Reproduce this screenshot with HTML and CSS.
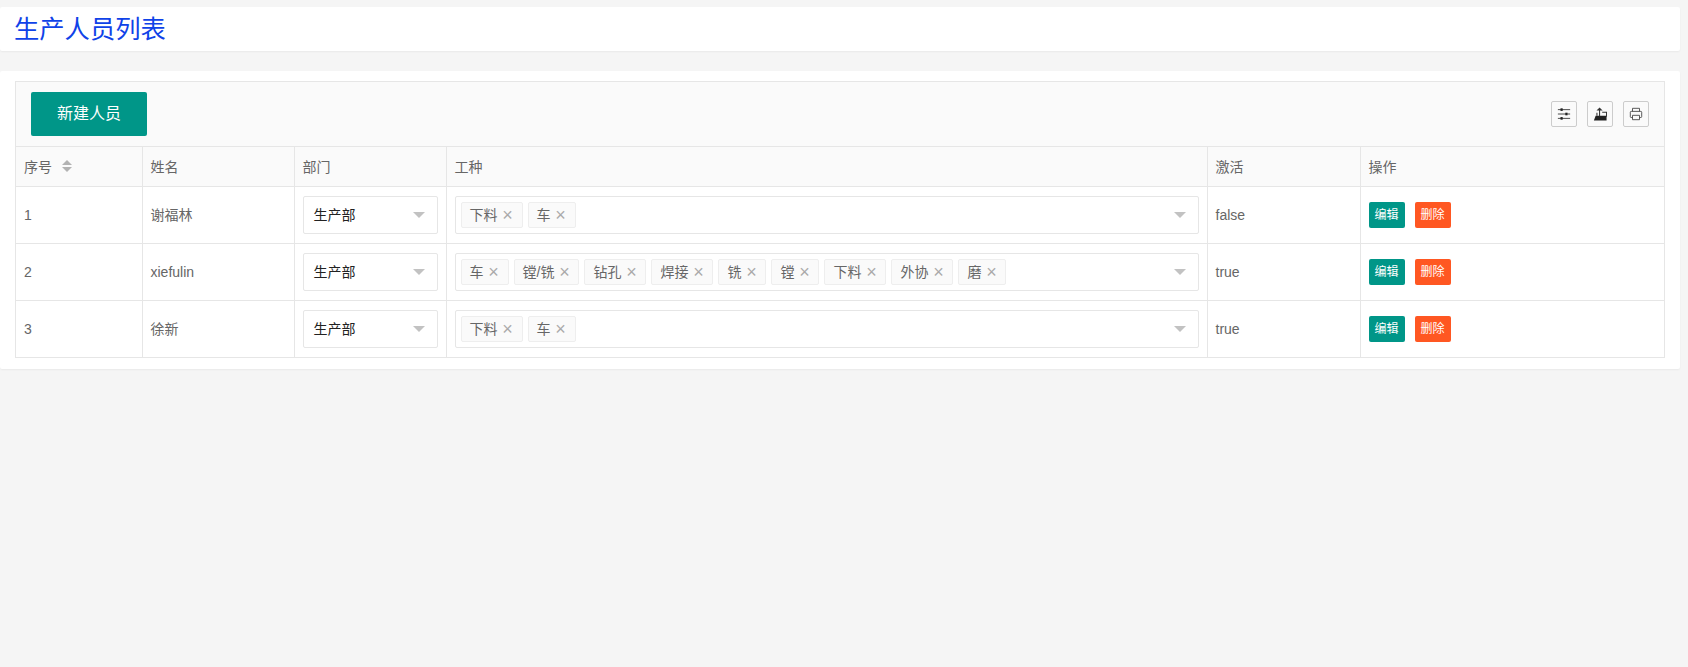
FILE: index.html
```html
<!DOCTYPE html>
<html lang="zh">
<head>
<meta charset="utf-8">
<title>生产人员列表</title>
<link rel="stylesheet" href="styles.css">
</head>
<body>
<header class="page-head"><h1>生产人员列表</h1></header>
<main class="panel">
  <div class="grid">
    <div class="toolbar">
      <button class="btn btn-new">新建人员</button>
      <div class="tools">
        <span class="tool"><svg viewBox="0 0 16 16" width="14" height="14"><path d="M1 3h14M1 8h14M1 13h14" stroke="#333" stroke-width="1" fill="none"/><rect x="4" y="1.5" width="2.5" height="3" fill="#222"/><rect x="9.5" y="6.5" width="2.5" height="3" fill="#222"/><rect x="4" y="11.5" width="2.5" height="3" fill="#222"/></svg></span>
        <span class="tool"><svg viewBox="0 0 16 16" width="14" height="14"><path d="M1 15.500l2-5.500H15.500v5.500z" fill="#222"/><path d="M10.500 6H15.500v5M7.500 3v7.500M4.500 10V6.500" stroke="#333" stroke-width="1.200" fill="none"/><path d="M7.500.5l3.500 3.500H4z" fill="#333"/></svg></span>
        <span class="tool"><svg viewBox="0 0 16 16" width="14" height="14"><path d="M4 5V1.500h8V5M4 12H2.500Q1.500 12 1.500 11V6Q1.500 5 2.500 5h11Q14.500 5 14.500 6v5q0 1-1 1H12M4 9.500h8v5H4z" stroke="#444" fill="none"/></svg></span>
      </div>
    </div>
    <table class="table">
      <colgroup><col class="c1"><col class="c2"><col class="c3"><col class="c4"><col class="c5"><col class="c6"></colgroup>
      <thead>
        <tr><th>序号<span class="sort"><i class="up"></i><i class="down"></i></span></th><th>姓名</th><th>部门</th><th>工种</th><th>激活</th><th>操作</th></tr>
      </thead>
      <tbody>
        <tr>
          <td>1</td><td>谢福林</td>
          <td><div class="select"><span>生产部</span><i class="caret"></i></div></td>
          <td><div class="select multi"><div class="tags"><span class="tag">下料<b>×</b></span><span class="tag">车<b>×</b></span></div><i class="caret"></i></div></td>
          <td>false</td>
          <td><div class="ops"><button class="mini edit">编辑</button><button class="mini del">删除</button></div></td>
        </tr>
        <tr>
          <td>2</td><td>xiefulin</td>
          <td><div class="select"><span>生产部</span><i class="caret"></i></div></td>
          <td><div class="select multi"><div class="tags"><span class="tag">车<b>×</b></span><span class="tag">镗/铣<b>×</b></span><span class="tag">钻孔<b>×</b></span><span class="tag">焊接<b>×</b></span><span class="tag">铣<b>×</b></span><span class="tag">镗<b>×</b></span><span class="tag">下料<b>×</b></span><span class="tag">外协<b>×</b></span><span class="tag">磨<b>×</b></span></div><i class="caret"></i></div></td>
          <td>true</td>
          <td><div class="ops"><button class="mini edit">编辑</button><button class="mini del">删除</button></div></td>
        </tr>
        <tr>
          <td>3</td><td>徐新</td>
          <td><div class="select"><span>生产部</span><i class="caret"></i></div></td>
          <td><div class="select multi"><div class="tags"><span class="tag">下料<b>×</b></span><span class="tag">车<b>×</b></span></div><i class="caret"></i></div></td>
          <td>true</td>
          <td><div class="ops"><button class="mini edit">编辑</button><button class="mini del">删除</button></div></td>
        </tr>
      </tbody>
    </table>
  </div>
</main>
</body>
</html>
```
FILE: styles.css
```css
* { box-sizing: border-box; }
html, body { margin: 0; height: 100%; }
body {
  padding: 7px 8px 0 0;
  background: #f5f5f5;
  font: 14px/20px "Liberation Sans", "Noto Sans CJK SC", sans-serif;
  color: #666;
}
.page-head {
  height: 44px;
  background: #fff;
  border-radius: 2px;
  box-shadow: 0 1px 2px rgba(0,0,0,.05);
  padding: 0 14px;
}
.page-head h1 {
  margin: 0;
  font-size: 25.3px;
  font-weight: 400;
  line-height: 44px;
  color: #0f42e8;
}
.panel {
  margin-top: 20px;
  height: 298px;
  background: #fff;
  border-radius: 2px;
  box-shadow: 0 1px 2px rgba(0,0,0,.05);
  padding: 10px 15px;
}
.grid { border: 1px solid #e6e6e6; border-bottom: 0; }
.toolbar {
  height: 64px;
  background: #fafafa;
  padding: 10px 15px;
  display: flex;
  justify-content: space-between;
  align-items: center;
}
.btn {
  border: 0;
  font: inherit;
  color: #fff;
  background: #009688;
  border-radius: 2px;
  height: 44px;
  width: 116px;
  font-size: 16px;
}
.tools { display: flex; gap: 10px; }
.tool {
  width: 26px;
  height: 26px;
  border: 1px solid #ccc;
  border-radius: 2px;
  display: flex;
  align-items: center;
  justify-content: center;
}
.table { width: 100%; border-collapse: collapse; table-layout: fixed; }
.c1 { width: 126px; }
.c2 { width: 152px; }
.c3 { width: 152px; }
.c5 { width: 153px; }
.c6 { width: 304px; }
th, td {
  border: 1px solid #e6e6e6;
  padding: 0 8px;
  font-weight: 400;
  text-align: left;
}
tr > :first-child { border-left: 0; }
tr > :last-child { border-right: 0; }
thead tr { height: 40px; background: #fafafa; }
tbody tr { height: 57px; }
.sort { display: inline-flex; flex-direction: column; gap: 2px; margin: 0 0 3px 10px; vertical-align: middle; }
.sort i { width: 0; height: 0; border: 5px solid transparent; }
.sort .up { border-top: 0; border-bottom-color: #b2b2b2; }
.sort .down { border-bottom: 0; border-top-color: #b2b2b2; }
.select {
  height: 38px;
  border: 1px solid #e6e6e6;
  border-radius: 2px;
  background: #fff;
  padding: 0 12px 0 10px;
  display: flex;
  align-items: center;
  justify-content: space-between;
  color: #222;
}
.caret { width: 0; height: 0; border: 6px solid transparent; border-bottom: 0; border-top: 6px solid #c2c2c2; }
.multi { padding: 0 12px 0 5px; }
.tags { display: flex; gap: 5px; }
.tag {
  height: 26px;
  line-height: 24px;
  border: 1px solid #eee;
  background: #fafafa;
  border-radius: 2px;
  padding: 0 8px;
  color: #666;
  display: flex;
  align-items: center;
  gap: 4px;
}
.tag b { width: 12px; text-align: center; font-weight: 400; color: #aaa; font-size: 18px; }
.ops { display: flex; gap: 10px; }
.mini {
  width: 36px;
  height: 26px;
  border: 0;
  border-radius: 2px;
  padding: 0;
  color: #fff;
  font: 12px/26px "Liberation Sans", "Noto Sans CJK SC", sans-serif;
}
.edit { background: #009688; }
.del { background: #ff5722; }
```
